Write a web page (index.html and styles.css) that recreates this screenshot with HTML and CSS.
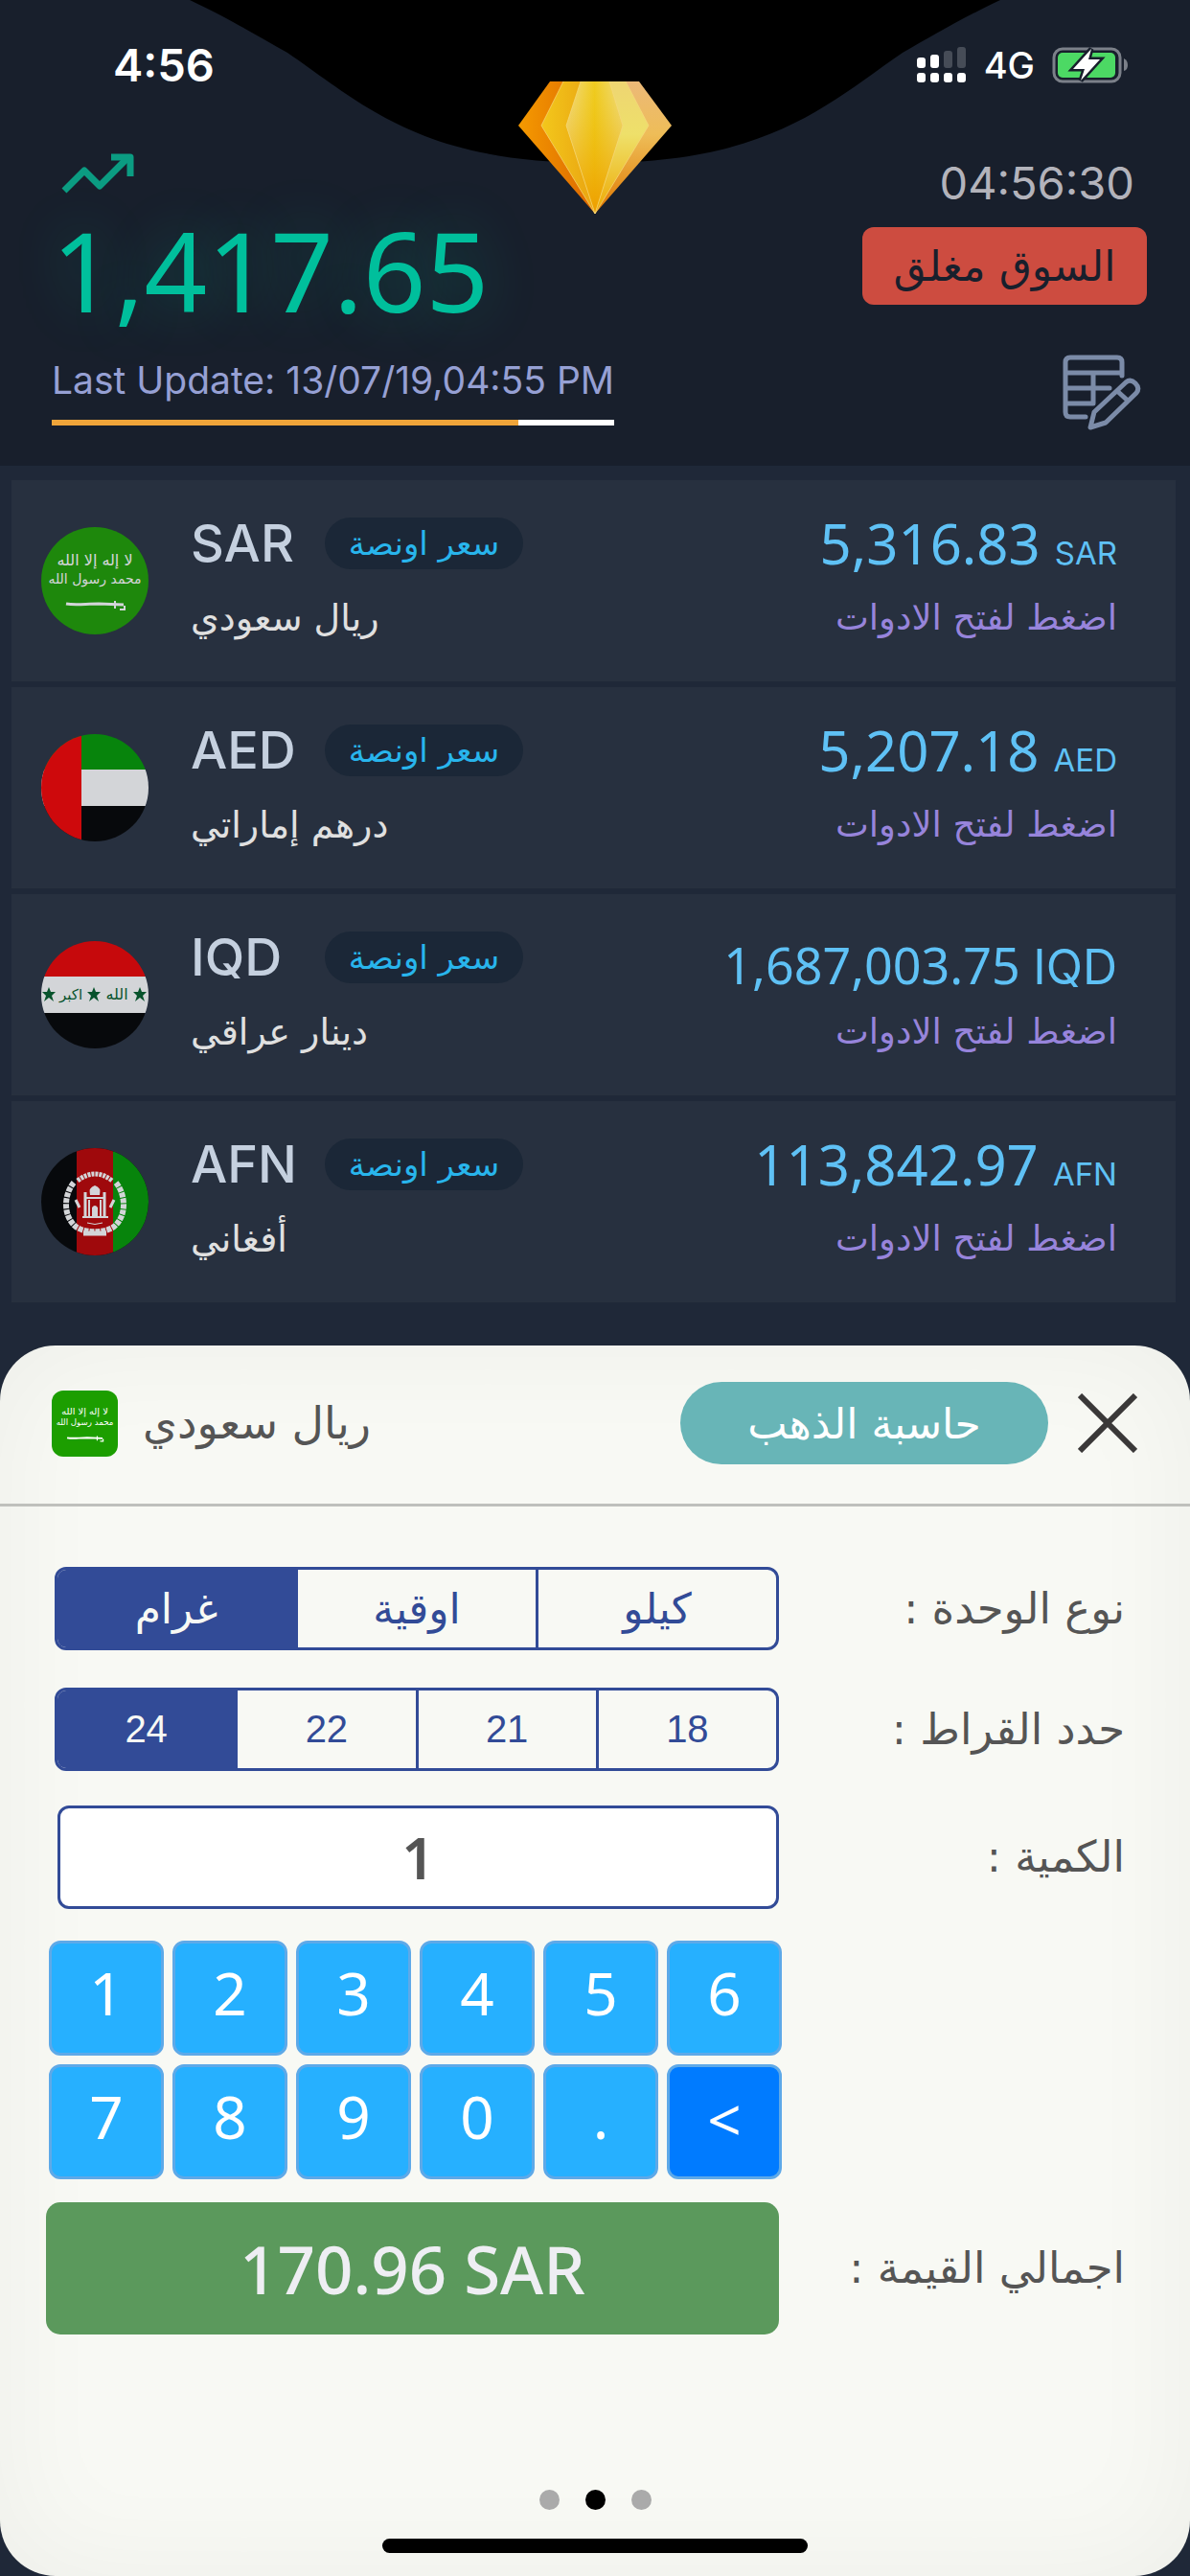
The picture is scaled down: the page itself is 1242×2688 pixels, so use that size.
FILE: index.html
```html
<!DOCTYPE html>
<html lang="ar" dir="ltr">
<head>
<meta charset="utf-8">
<meta name="viewport" content="width=device-width, initial-scale=1">
<title>حاسبة الذهب</title>
<link rel="stylesheet" href="styles.css">
</head>
<body>
<header class="top">
  <svg class="notch" viewBox="0 0 846 170" aria-hidden="true"><path d="M0 0C42 20 72 38 102 55C182 110 242 170 423 170S664 110 744 55C774 38 804 20 846 0z"/></svg>
  <svg class="gem" viewBox="0 0 160 138" aria-hidden="true">
    <defs>
      <linearGradient id="g1" x1="0" x2="1"><stop offset="0" stop-color="#f59a00"/><stop offset="1" stop-color="#d95f00"/></linearGradient>
      <linearGradient id="g2" x1="0" x2="1"><stop offset="0" stop-color="#f3c81c"/><stop offset="1" stop-color="#e6960c"/></linearGradient>
      <linearGradient id="g3" x1="0" x2="1"><stop offset="0" stop-color="#f1dc8c"/><stop offset=".5" stop-color="#efcb20"/><stop offset="1" stop-color="#efdd86"/></linearGradient>
      <linearGradient id="g4" x1="0" y1="0" x2="0" y2="1"><stop offset="0" stop-color="#eebf00" stop-opacity="0"/><stop offset="1" stop-color="#ee9d00"/></linearGradient>
      <linearGradient id="g5" x1="0" y1="0" x2="0" y2="1"><stop offset="0" stop-color="#eed572"/><stop offset=".4" stop-color="#eee06a"/><stop offset="1" stop-color="#eea800"/></linearGradient>
      <linearGradient id="g6" x1="0" y1="0" x2="0" y2="1"><stop offset="0" stop-color="#ecb978"/><stop offset=".4" stop-color="#eebd58"/><stop offset="1" stop-color="#e07800"/></linearGradient>
    </defs>
    <path d="M33 0L0 46l80 92 13-92V0z" fill="url(#g1)"/>
    <path d="M47 0L24 46l56 92 20-92V0z" fill="url(#g2)"/>
    <path d="M126 0l34 46-80 92L100 0z" fill="url(#g6)"/>
    <path d="M112 0l24 46-56 92L90 0z" fill="url(#g5)"/>
    <path d="M65 0L50 46l30 92 29-92L95 0z" fill="url(#g3)"/>
    <path d="M65 0L50 46l30 92 29-92L95 0z" fill="url(#g4)"/>
    <path d="M47 0L24 46l56 92M65 0L50 46l30 92M95 0l14 46-29 92M112 0l24 46-56 92" fill="none" stroke="#f5d97e" stroke-opacity=".7"/>
  </svg>

  <div class="status">
    <span class="status-time">4:56</span>
    <span class="status-right">
      <svg width="52" height="38" viewBox="0 0 52 38" fill="#fff" aria-hidden="true"><rect y="11" width="9" height="11" rx="3"/><rect x="14" y="8" width="9" height="14" rx="3"/><g fill="#464c57"><rect x="28" y="4" width="9" height="18" rx="3"/><rect x="42" width="9" height="22" rx="3"/></g><rect y="27" width="9" height="10" rx="3"/><rect x="14" y="27" width="9" height="10" rx="3"/><rect x="28" y="27" width="9" height="10" rx="3"/><rect x="42" y="27" width="9" height="10" rx="3"/></svg>
      <span class="network">4G</span>
      <svg width="80" height="38" viewBox="0 0 80 38" aria-hidden="true"><rect x="2" y="2" width="69" height="34" rx="9" fill="none" stroke="#7b8089" stroke-width="3"/><path d="M75 12q4 2 4 7t-4 6z" fill="#7b8089"/><rect x="6" y="6" width="60" height="26" rx="5" fill="#4cd964"/><path d="M41 2L22 23h12l-4 12 20-22H38l3-11z" fill="#fff" stroke="#181f2c" stroke-width="5" paint-order="stroke"/></svg>
    </span>
  </div>

  <div class="summary">
    <div class="summary-left">
      <svg class="trend" width="78" height="48" viewBox="0 0 78 48" fill="none" stroke="#0b9c82" stroke-width="7" aria-label="up"><path d="M4 43L25 22l16 16L70 9" stroke-linejoin="round"/><path d="M53 8h20v20" stroke-linejoin="round"/></svg>
      <strong class="rate">1,417.65</strong>
      <span class="updated">Last Update: 13/07/19,04:55 PM</span>
      <div class="progress"><div class="progress-fill"></div></div>
    </div>
    <div class="summary-right">
      <time class="clock">04:56:30</time>
      <span class="closed" dir="rtl">السوق مغلق</span>
      <button class="edit" type="button" aria-label="تعديل القائمة">
        <svg width="84" height="84" viewBox="0 0 84 84" fill="none" stroke="#7b8ba8" stroke-width="5" stroke-linecap="round" stroke-linejoin="round"><path d="M26 67H10q-5 0-5-5V10q0-5 5-5h49q5 0 5 5v14M5 21h59M5 37h46M5 53h29V21"/><path d="M31 78l4-16 33-31q5-4 10 1 5 5 1 10L47 73zM59 40l11 10"/></svg>
      </button>
    </div>
  </div>
</header>

<main>
  <ul class="rates">
    <li class="rate-row">
      <svg class="flag" viewBox="0 0 112 112" aria-hidden="true">
        <rect width="112" height="112" fill="#1c9e00"/>
        <text class="flag-script" x="56" y="40" text-anchor="middle" font-size="16" fill="#fff">لا إله إلا الله</text>
        <text class="flag-script" x="56" y="59" text-anchor="middle" font-size="14" fill="#fff">محمد رسول الله</text>
        <g id="sword" fill="none" stroke="#fff"><path d="M26 80c10 2 20 0 34 0l26 1" stroke-width="3"/><path d="M77 77v8M87 82v4h-5" stroke-width="2"/></g>
      </svg>
      <div class="currency"><div class="currency-head"><b class="code">SAR</b><span class="pill" dir="rtl">سعر اونصة</span></div><span class="name" dir="rtl">ريال سعودي</span></div>
      <div class="value"><span class="price">5,316.83 <small>SAR</small></span><span class="hint" dir="rtl">اضغط لفتح الادوات</span></div>
    </li>
    <li class="rate-row">
      <svg class="flag" viewBox="0 0 112 112" aria-hidden="true">
        <rect width="112" height="38" fill="#009a00"/><rect y="37" width="112" height="38" fill="#fff"/><rect y="75" width="112" height="37"/><rect width="42" height="112" fill="#f80000"/>
      </svg>
      <div class="currency"><div class="currency-head"><b class="code">AED</b><span class="pill" dir="rtl">سعر اونصة</span></div><span class="name" dir="rtl">درهم إماراتي</span></div>
      <div class="value"><span class="price">5,207.18 <small>AED</small></span><span class="hint" dir="rtl">اضغط لفتح الادوات</span></div>
    </li>
    <li class="rate-row">
      <svg class="flag" viewBox="0 0 112 112" aria-hidden="true">
        <rect width="112" height="38" fill="#ee0000"/><rect y="37" width="112" height="38" fill="#fff"/><rect y="75" width="112" height="37"/>
        <g fill="#005c28"><path id="star" d="M8 48l2 5h5l-4 4 2 6-5-4-5 4 2-6-4-4h5z"/><use href="#star" x="47"/><use href="#star" x="95"/>
        <text class="flag-script" x="79" y="61" text-anchor="middle" font-size="16">الله</text>
        <text class="flag-script" x="31" y="61" text-anchor="middle" font-size="15">اكبر</text></g>
      </svg>
      <div class="currency"><div class="currency-head"><b class="code">IQD</b><span class="pill" dir="rtl">سعر اونصة</span></div><span class="name" dir="rtl">دينار عراقي</span></div>
      <div class="value"><span class="price price-long">1,687,003.75 <small>IQD</small></span><span class="hint" dir="rtl">اضغط لفتح الادوات</span></div>
    </li>
    <li class="rate-row">
      <svg class="flag" viewBox="0 0 112 112" aria-hidden="true">
        <rect width="112" height="112" fill="#000"/><rect x="37" width="38" height="112" fill="#be0000"/><rect x="75" width="37" height="112" fill="#009a00"/>
        <g fill="none" stroke="#fff">
          <path d="M34 36c-10 12-12 34 2 46 10 7 30 7 40 0 14-12 12-34 2-46" stroke-width="6" stroke-dasharray="5 1"/>
          <path d="M38 34q18-14 36 0" stroke-width="5" stroke-dasharray="3 1"/>
          <path d="M46 46v25M66 46v25" stroke-width="3"/>
          <path d="M46 52h20M50 71V54M62 71V54" stroke-width="2"/>
          <path d="M40 62l-4-8M72 62l4-8" stroke-width="3"/>
          <path d="M43 72h27" stroke-width="2"/><path d="M48 78q8 3 16 0" stroke-width="1"/><path d="M44 89h24" stroke-width="5"/>
        </g>
        <path d="M51 49q-2-8 5-10 7 2 5 10zM53 71V62q3-4 6 0v9z" fill="#fff"/>
      </svg>
      <div class="currency"><div class="currency-head"><b class="code">AFN</b><span class="pill" dir="rtl">سعر اونصة</span></div><span class="name" dir="rtl">أفغاني</span></div>
      <div class="value"><span class="price">113,842.97 <small>AFN</small></span><span class="hint" dir="rtl">اضغط لفتح الادوات</span></div>
    </li>
  </ul>

  <section class="sheet">
    <div class="sheet-head">
      <svg class="sheet-flag" viewBox="0 0 112 112" aria-hidden="true">
        <rect width="112" height="112" fill="#1c9e00"/>
        <text class="flag-script" x="56" y="40" text-anchor="middle" font-size="16" fill="#fff">لا إله إلا الله</text>
        <text class="flag-script" x="56" y="59" text-anchor="middle" font-size="14" fill="#fff">محمد رسول الله</text>
        <use href="#sword"/>
      </svg>
      <h1 class="sheet-title" dir="rtl">ريال سعودي</h1>
      <button class="calc" type="button" dir="rtl">حاسبة الذهب</button>
      <button class="close" type="button" aria-label="إغلاق"><svg width="62" height="62" viewBox="0 0 62 62" stroke="#3a3838" stroke-width="6"><path d="M2 2l58 58M60 2L2 60"/></svg></button>
    </div>

    <form class="form">
      <div class="segments" role="radiogroup" aria-labelledby="unit-label">
        <label><input type="radio" name="unit" checked><span dir="rtl">غرام</span></label>
        <label><input type="radio" name="unit"><span dir="rtl">اوقية</span></label>
        <label><input type="radio" name="unit"><span dir="rtl">كيلو</span></label>
      </div>
      <span class="label" id="unit-label" dir="rtl">نوع الوحدة :</span>

      <div class="segments segments-karat" role="radiogroup" aria-labelledby="karat-label">
        <label><input type="radio" name="karat" checked><span>24</span></label>
        <label><input type="radio" name="karat"><span>22</span></label>
        <label><input type="radio" name="karat"><span>21</span></label>
        <label><input type="radio" name="karat"><span>18</span></label>
      </div>
      <span class="label" id="karat-label" dir="rtl">حدد القراط :</span>

      <input class="amount" id="amount" type="text" inputmode="decimal" value="1">
      <label class="label" for="amount" dir="rtl">الكمية :</label>

      <div class="keypad">
        <button type="button">1</button><button type="button">2</button><button type="button">3</button><button type="button">4</button><button type="button">5</button><button type="button">6</button>
        <button type="button">7</button><button type="button">8</button><button type="button">9</button><button type="button">0</button><button type="button">.</button><button type="button" class="back">&lt;</button>
      </div>

      <output class="total" id="total">170.96 SAR</output>
      <label class="label" for="total" dir="rtl">اجمالي القيمة :</label>
    </form>

    <div class="dots"><span class="dot"></span><span class="dot dot-active"></span><span class="dot"></span></div>
    <div class="home-bar"></div>
  </section>
</main>
</body>
</html>
```

FILE: styles.css
```css
* { box-sizing: border-box; }

body {
  margin: 0;
  min-height: 100vh;
  display: flex;
  flex-direction: column;
  background: #1f2838;
  font-family: Inter, "DejaVu Sans", sans-serif;
}

button { border: 0; padding: 0; background: none; font: inherit; cursor: pointer; }
svg { display: block; }
.flag-script { font-family: "DejaVu Sans", sans-serif; }

/* Header */
.top { position: relative; background: #181f2c; padding-bottom: 34px; }
.notch { position: absolute; top: 0; left: 50%; width: 846px; transform: translateX(-50%); }
.gem { position: absolute; top: 85px; left: 50%; width: 160px; transform: translateX(-50%); }

.status {
  position: relative;
  height: 156px;
  padding: 38px 64px 0 118px;
  display: flex;
  justify-content: space-between;
  align-items: flex-start;
  color: #fff;
}
.status-time { font-size: 47px; line-height: 60px; font-weight: 600; }
.status-right { display: flex; align-items: center; gap: 18px; height: 60px; }
.network { font-size: 38px; line-height: 60px; font-weight: 500; }

.summary { position: relative; display: flex; justify-content: space-between; padding: 0 45px 0 54px; }
.summary-left { display: flex; flex-direction: column; }
.trend { margin-left: 9px; }
.rate {
  font-family: "Noto Sans", sans-serif;
  font-size: 115px;
  line-height: 156px;
  font-weight: 400;
  color: #00bf9c;
  text-shadow: 0 0 60px #00bf9c55;
}
.updated { margin-top: 12px; font-size: 39px; line-height: 50px; color: #96a0d4; white-space: nowrap; }
.progress { margin-top: 16px; height: 6px; background: #fff; }
.progress-fill { width: 83%; height: 100%; background: #f0a53a; }

.summary-right { display: flex; flex-direction: column; align-items: flex-end; padding-top: 5px; }
.clock { margin-right: 13px; font-size: 47px; line-height: 60px; color: #b3b3bb; }
.closed {
  margin-top: 16px;
  width: 297px;
  border-radius: 12px;
  background: #cd4c40;
  color: #181f2c;
  font-family: "DejaVu Sans", sans-serif;
  font-size: 44px;
  line-height: 81px;
  text-align: center;
}
.edit { margin: 50px 6px 0 0; }

/* Currency list */
.rates { list-style: none; margin: 0; padding: 15px 15px 45px 12px; display: grid; gap: 6px; }
.rate-row { display: flex; align-items: center; background: #27303f; padding: 39px 61px 42px 31px; }
.flag { width: 112px; height: 112px; border-radius: 50%; margin: 3px 44px 0 0; opacity: .8; flex: none; }
.currency { flex: 1; display: flex; flex-direction: column; align-items: flex-start; gap: 27px; }
.currency-head { display: flex; align-items: center; height: 54px; }
.code { min-width: 140px; font-size: 54px; line-height: 54px; font-weight: 500; color: #c5d0df; }
.pill {
  width: 207px;
  border-radius: 27px;
  background: #1b2737;
  color: #28b5ec;
  font-family: "DejaVu Sans", sans-serif;
  font-size: 34px;
  line-height: 54px;
  text-align: center;
}
.name { font-family: "DejaVu Sans", sans-serif; font-size: 38px; line-height: 48px; color: #e0e0e0; }
.value { display: flex; flex-direction: column; align-items: flex-end; gap: 27px; white-space: nowrap; }
.price { height: 54px; font-family: "Noto Sans", sans-serif; font-size: 58px; line-height: 54px; color: #5fc1f5; }
.price small { font-family: Inter, sans-serif; font-size: 33px; }
.price-long { font-size: 52px; line-height: 69px; }
.price-long small { font-size: 50px; }
.hint { font-family: "DejaVu Sans", sans-serif; font-size: 37px; line-height: 48px; color: #9784db; }

/* Calculator sheet */
main { flex: 1; display: flex; flex-direction: column; }
.sheet {
  flex: 1;
  display: flex;
  flex-direction: column;
  border-radius: 58px;
  background: #f8f9f4;
  box-shadow: inset 0 0 120px #0000000c;
  color: #555;
}
.sheet-head { display: flex; align-items: center; height: 168px; padding: 0 55px 3px 54px; border-bottom: 3px solid #bfc0bc; }
.sheet-flag { width: 69px; height: 69px; border-radius: 12px; }
.sheet-title { flex: 1; margin: 0; padding-left: 26px; text-align: left; font-family: "DejaVu Sans", sans-serif; font-size: 46px; line-height: 60px; font-weight: 400; }
.calc { width: 384px; height: 86px; border-radius: 43px; background: #68b5b7; color: #fff; font-family: "DejaVu Sans", sans-serif; font-size: 44px; }
.close { margin-left: 31px; }

.form {
  display: grid;
  grid-template-columns: minmax(0, 768fr) minmax(0, 358fr);
  align-items: center;
  padding: 63px 68px 0 48px;
}
.label { font-family: "DejaVu Sans", sans-serif; font-size: 45px; line-height: 60px; white-space: nowrap; }
.segments {
  display: flex;
  height: 87px;
  margin: 0 3px 39px 9px;
  border: 3px solid #324b97;
  border-radius: 12px;
  overflow: hidden;
  color: #324b97;
  font-family: "DejaVu Sans", sans-serif;
  font-size: 44px;
}
.segments + .label { margin-bottom: 39px; }
.segments-karat { font-family: "Liberation Sans", sans-serif; font-size: 40px; margin-bottom: 36px; }
.segments-karat + .label { margin-bottom: 36px; }
.segments label { flex: 1; display: flex; }
.segments label + label { border-left: 3px solid #324b97; }
.segments input { position: absolute; opacity: 0; }
.segments span { flex: 1; display: flex; align-items: center; justify-content: center; }
.segments input:checked + span { background: #324b97; color: #f8f9f4; }
.amount {
  height: 108px;
  margin: 0 3px 0 12px;
  border: 3px solid #324b97;
  border-radius: 12px;
  background: #fff;
  color: #555;
  font-family: "Noto Sans", sans-serif;
  font-size: 60px;
  font-weight: 600;
  text-align: center;
}
.keypad { grid-column: 1; display: grid; grid-template-columns: repeat(6, 1fr); gap: 9px; margin: 33px 0 24px 3px; }
.keypad button {
  height: 120px;
  padding-bottom: 12px;
  border: 3px solid #5ea9e8;
  border-radius: 12px;
  background: #26b0ff;
  color: #fff;
  font-family: "Noto Sans", sans-serif;
  font-size: 62px;
}
.keypad .back { background: #007bff; padding-bottom: 6px; }
.total {
  grid-column: 1;
  margin-right: 3px;
  border-radius: 15px;
  background: #5b995c;
  color: #eeeef3;
  font-family: "Noto Sans", sans-serif;
  font-size: 69px;
  line-height: 138px;
  font-weight: 500;
  text-align: center;
  white-space: nowrap;
}

.dots { display: flex; justify-content: center; gap: 27px; margin: auto 0 30px; }
.dot { width: 21px; height: 21px; border-radius: 50%; background: #aaa; }
.dot-active { background: #000; }
.home-bar { width: 444px; height: 15px; margin: 0 auto 24px; border-radius: 8px; background: #000; }
```
